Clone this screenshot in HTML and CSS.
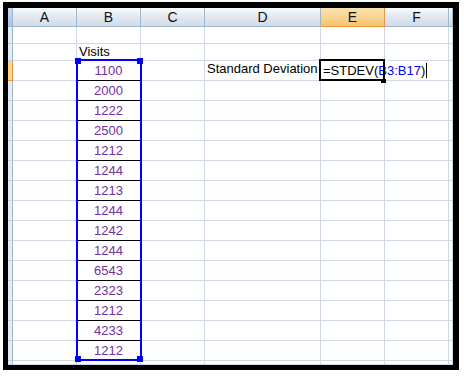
FILE: index.html
```html
<!DOCTYPE html>
<html lang="en">
<head>
  <meta charset="UTF-8">
  <title>Standard Deviation</title>
  <link rel="stylesheet" href="styles.css">
</head>
<body>
  <div class="frame">
    <div class="sheet">
      <!-- column headers -->
      <div class="hd corner"></div>
      <div class="hd">A</div>
      <div class="hd">B</div>
      <div class="hd">C</div>
      <div class="hd">D</div>
      <div class="hd active">E</div>
      <div class="hd">F</div>
      <div class="hd"></div>

      <!-- row 1 -->
      <div class="rh"></div><div class="c"></div><div class="c"></div><div class="c"></div><div class="c"></div><div class="c"></div><div class="c"></div><div class="c"></div>
      <!-- row 2 -->
      <div class="rh"></div><div class="c"></div><div class="c label">Visits</div><div class="c"></div><div class="c"></div><div class="c"></div><div class="c"></div><div class="c"></div>
      <!-- row 3 -->
      <div class="rh active"></div><div class="c"></div><div class="c num">1100</div><div class="c"></div><div class="c label">Standard Deviation</div><div class="c formula">=STDEV(<span class="ref">B3:B17</span>)<span class="caret"></span></div><div class="c"></div><div class="c"></div>
      <div class="rh"></div><div class="c"></div><div class="c num">2000</div><div class="c"></div><div class="c"></div><div class="c"></div><div class="c"></div><div class="c"></div>
      <div class="rh"></div><div class="c"></div><div class="c num">1222</div><div class="c"></div><div class="c"></div><div class="c"></div><div class="c"></div><div class="c"></div>
      <div class="rh"></div><div class="c"></div><div class="c num">2500</div><div class="c"></div><div class="c"></div><div class="c"></div><div class="c"></div><div class="c"></div>
      <div class="rh"></div><div class="c"></div><div class="c num">1212</div><div class="c"></div><div class="c"></div><div class="c"></div><div class="c"></div><div class="c"></div>
      <div class="rh"></div><div class="c"></div><div class="c num">1244</div><div class="c"></div><div class="c"></div><div class="c"></div><div class="c"></div><div class="c"></div>
      <div class="rh"></div><div class="c"></div><div class="c num">1213</div><div class="c"></div><div class="c"></div><div class="c"></div><div class="c"></div><div class="c"></div>
      <div class="rh"></div><div class="c"></div><div class="c num">1244</div><div class="c"></div><div class="c"></div><div class="c"></div><div class="c"></div><div class="c"></div>
      <div class="rh"></div><div class="c"></div><div class="c num">1242</div><div class="c"></div><div class="c"></div><div class="c"></div><div class="c"></div><div class="c"></div>
      <div class="rh"></div><div class="c"></div><div class="c num">1244</div><div class="c"></div><div class="c"></div><div class="c"></div><div class="c"></div><div class="c"></div>
      <div class="rh"></div><div class="c"></div><div class="c num">6543</div><div class="c"></div><div class="c"></div><div class="c"></div><div class="c"></div><div class="c"></div>
      <div class="rh"></div><div class="c"></div><div class="c num">2323</div><div class="c"></div><div class="c"></div><div class="c"></div><div class="c"></div><div class="c"></div>
      <div class="rh"></div><div class="c"></div><div class="c num">1212</div><div class="c"></div><div class="c"></div><div class="c"></div><div class="c"></div><div class="c"></div>
      <div class="rh"></div><div class="c"></div><div class="c num">4233</div><div class="c"></div><div class="c"></div><div class="c"></div><div class="c"></div><div class="c"></div>
      <div class="rh"></div><div class="c"></div><div class="c num">1212</div><div class="c"></div><div class="c"></div><div class="c"></div><div class="c"></div><div class="c"></div>
      <!-- partial row 18 -->
      <div class="rh"></div><div class="c"></div><div class="c"></div><div class="c"></div><div class="c"></div><div class="c"></div><div class="c"></div><div class="c"></div>

      <!-- range highlight for B3:B17 -->
      <div class="range">
        <span class="handle tl"></span>
        <span class="handle tr"></span>
        <span class="handle bl"></span>
        <span class="handle br"></span>
      </div>

      <!-- active cell E3 -->
      <div class="cursor">
        <span class="fill"></span>
      </div>
    </div>
  </div>
</body>
</html>
```

FILE: styles.css
```css
body {
  margin: 0;
  background: #fff;
  font-family: "Liberation Sans", Arial, sans-serif;
}

.frame {
  margin: 2px 0 0 3px;
  width: 445px;
  height: 357px;
  border-style: solid;
  border-color: #000;
  border-width: 6px 6px 5px 5px;
  overflow: hidden;
}

.sheet {
  position: relative;
  display: grid;
  grid-template-columns: 5px 64px 64px 64px 116px 64px 64px 4px;
  grid-template-rows: 19px 17px 17px repeat(15, 20px) 4px;
}

.sheet > div {
  box-sizing: border-box;
}

.hd {
  background: linear-gradient(#f9fbfd, #dfe6ef 55%, #d3dbe7);
  border-right: 1px solid #9eb6ce;
  border-bottom: 1px solid #9eb6ce;
  text-align: center;
  font-size: 14px;
  line-height: 18px;
  color: #111;
}

.hd.corner {
  background: linear-gradient(#c6d8f0, #a9c4e9);
}

.hd.active {
  background: linear-gradient(#fbe2b0, #f8d48f 55%, #f3c46c);
  border-right-color: #f29536;
  border-bottom-color: #f29536;
}

.rh {
  background: #e4ecf7;
  border-right: 1px solid #9eb6ce;
  border-bottom: 1px solid #c5d3e6;
}

.rh.active {
  background: #ffd58d;
  border-right-color: #f29536;
  border-bottom-color: #f29536;
}

.c {
  border-right: 1px solid #d0d7e5;
  border-bottom: 1px solid #d0d7e5;
  font-size: 13px;
  line-height: 19px;
  padding-left: 2px;
  white-space: nowrap;
  color: #000;
}

.c.label {
  line-height: 16px;
}

.c.num {
  color: #7030a0;
  text-align: center;
  padding-left: 0;
  border-bottom-color: #000;
}

.c.formula {
  position: relative;
  z-index: 1;
  overflow: visible;
  padding-left: 2px;
}

.ref {
  color: #0000ff;
}

.caret {
  display: inline-block;
  width: 1px;
  height: 15px;
  margin-left: 1px;
  vertical-align: -3px;
  background: #000;
}

.range {
  position: absolute;
  left: 68px;
  top: 51px;
  width: 66px;
  height: 302px;
  border: 2px solid #0000ff;
  box-sizing: border-box;
}

.handle {
  position: absolute;
  width: 6px;
  height: 6px;
  background: #0000ff;
}

.handle.tl { left: -3px; top: -3px; }
.handle.tr { right: -3px; top: -3px; }
.handle.bl { left: -3px; bottom: -3px; }
.handle.br { right: -3px; bottom: -3px; }

.cursor {
  position: absolute;
  left: 311px;
  top: 51px;
  width: 66px;
  height: 22px;
  border: 2px solid #000;
  box-sizing: border-box;
  z-index: 2;
}

.fill {
  position: absolute;
  right: -3px;
  bottom: -4px;
  width: 5px;
  height: 4px;
  background: #000;
}
```
